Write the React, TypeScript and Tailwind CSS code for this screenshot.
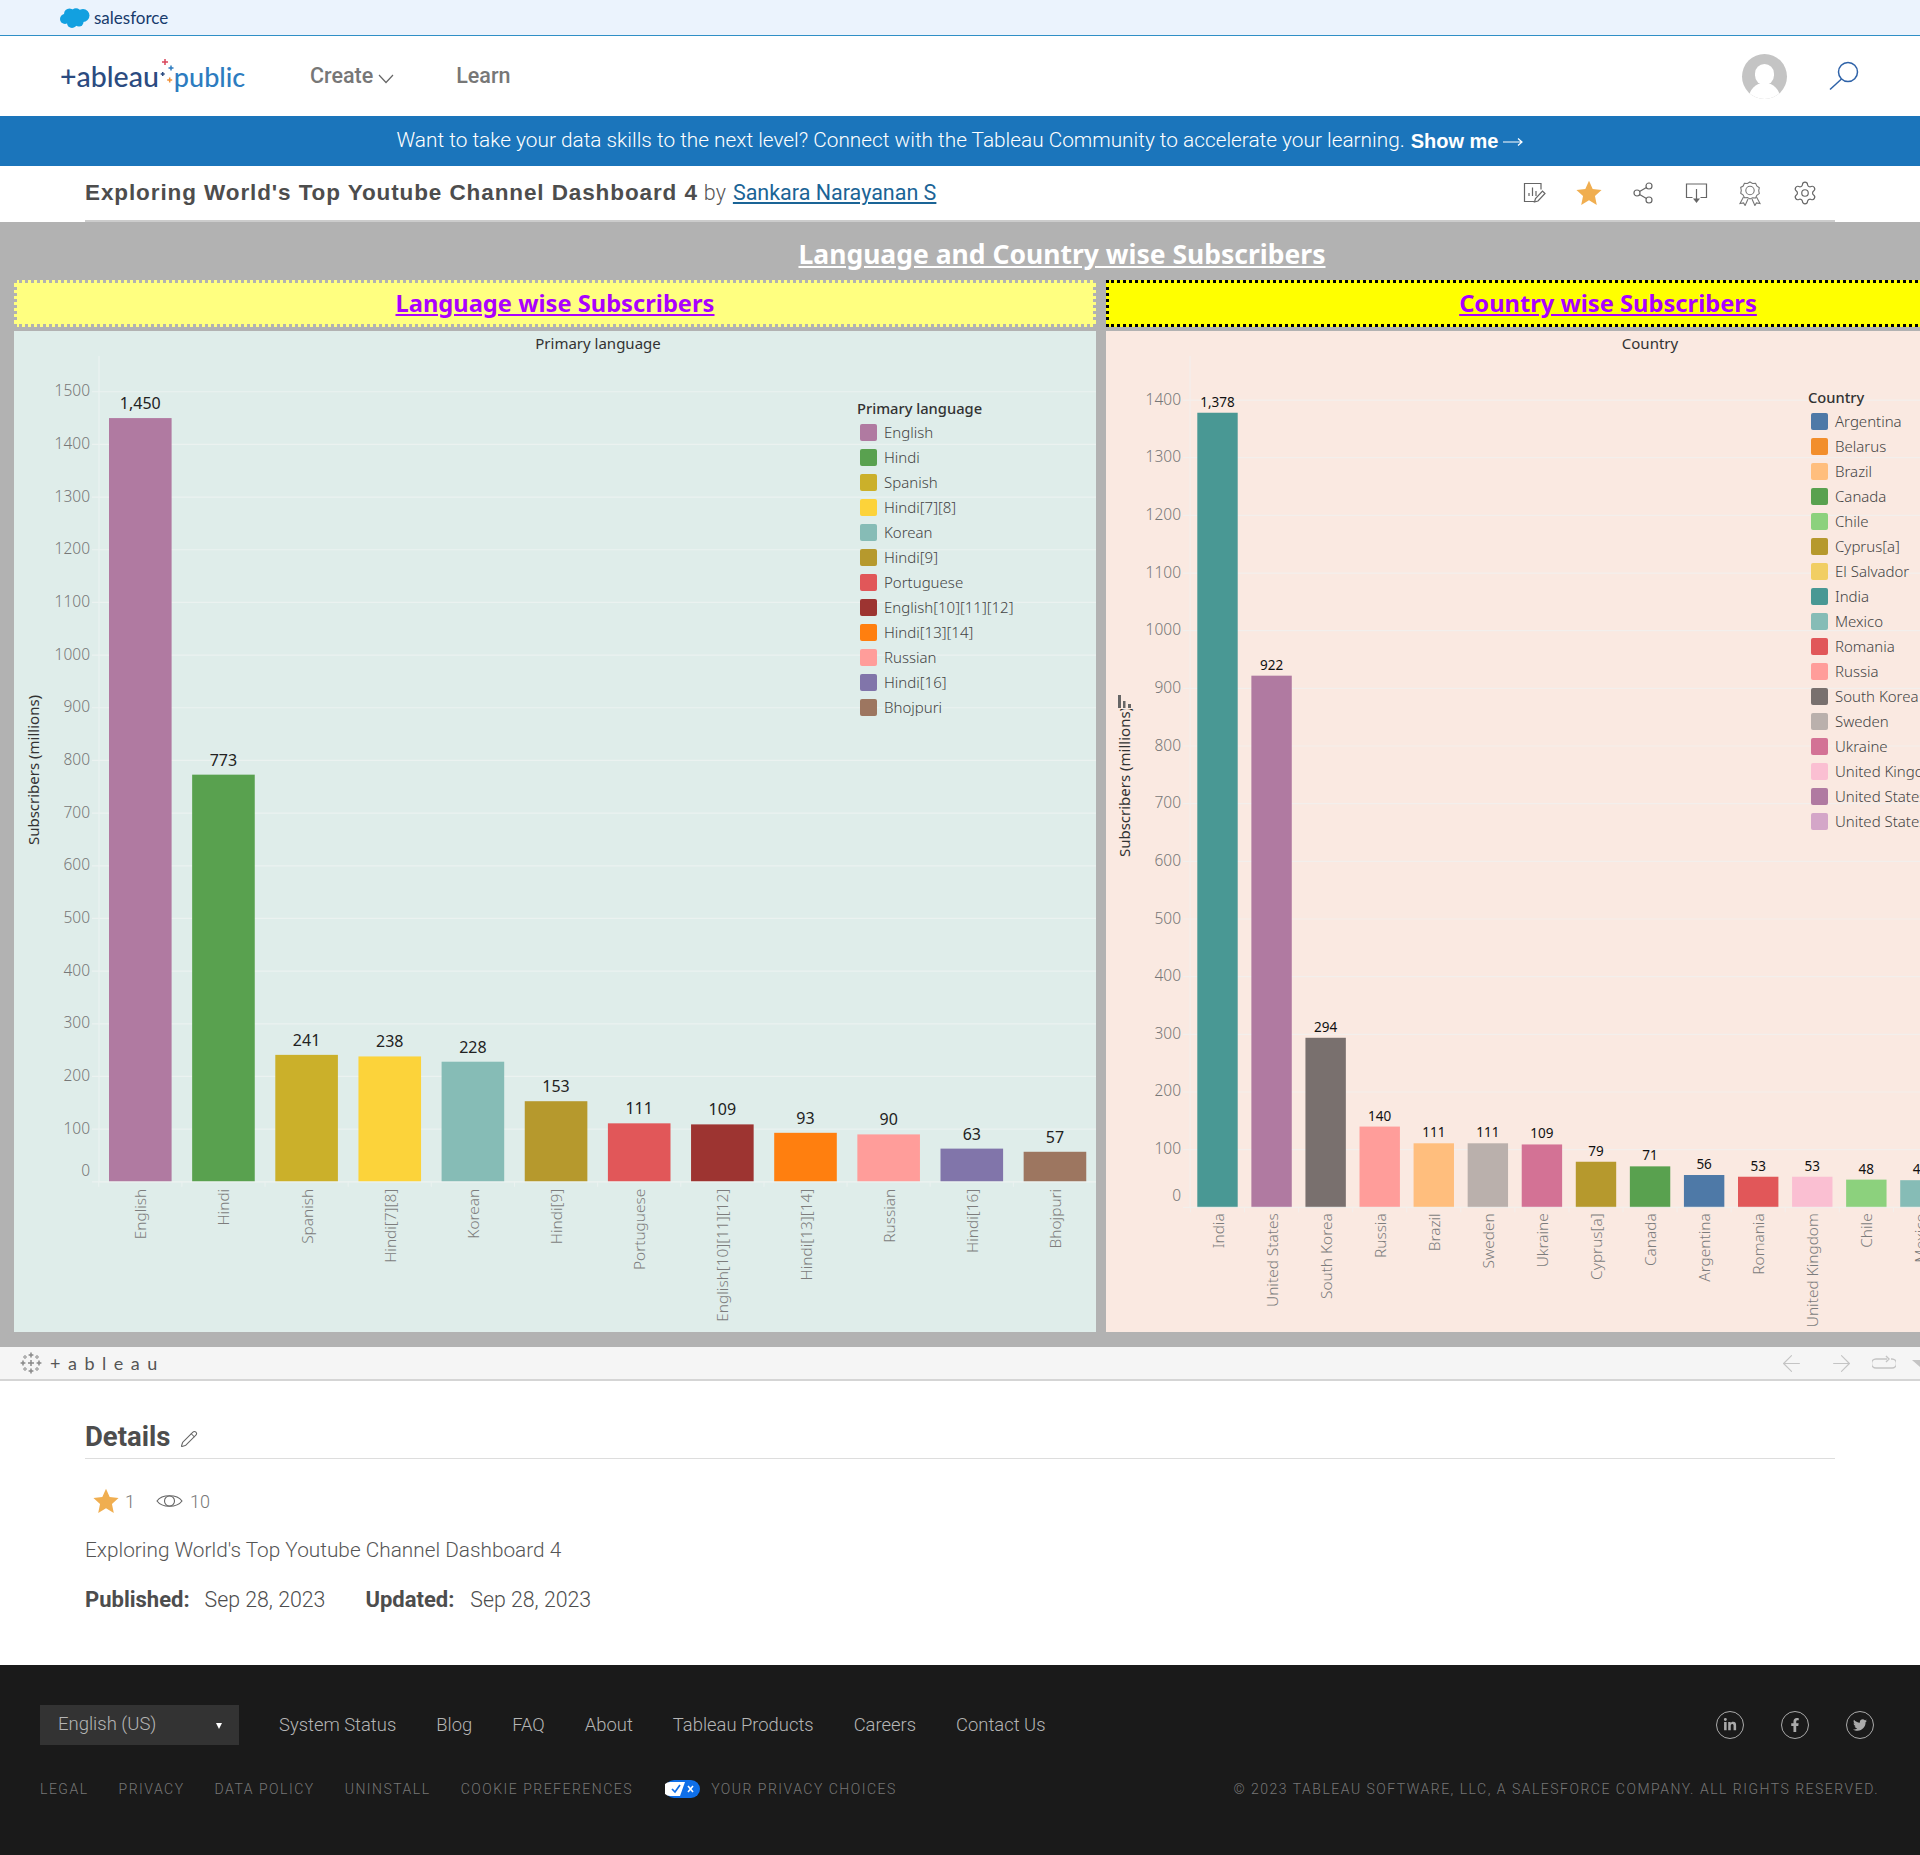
import { ArrowLeft, ArrowRight, Pencil, Settings, Share2 } from "lucide-react";
import { FaFacebookF, FaLinkedinIn, FaTwitter } from "react-icons/fa";

type Item = { name: string; value: number; color: string };

const languages: Item[] = [
  { name: "English", value: 1450, color: "#b07aa1" },
  { name: "Hindi", value: 773, color: "#59a14f" },
  { name: "Spanish", value: 241, color: "#cbb02a" },
  { name: "Hindi[7][8]", value: 238, color: "#fcd33a" },
  { name: "Korean", value: 228, color: "#86bcb6" },
  { name: "Hindi[9]", value: 153, color: "#b6992d" },
  { name: "Portuguese", value: 111, color: "#e15759" },
  { name: "English[10][11][12]", value: 109, color: "#9d3431" },
  { name: "Hindi[13][14]", value: 93, color: "#ff7f0f" },
  { name: "Russian", value: 90, color: "#ff9d9a" },
  { name: "Hindi[16]", value: 63, color: "#8175aa" },
  { name: "Bhojpuri", value: 57, color: "#9d7660" },
];

const countries: Item[] = [
  { name: "India", value: 1378, color: "#499894" },
  { name: "United States", value: 922, color: "#b07aa1" },
  { name: "South Korea", value: 294, color: "#79706e" },
  { name: "Russia", value: 140, color: "#ff9d9a" },
  { name: "Brazil", value: 111, color: "#ffbe7d" },
  { name: "Sweden", value: 111, color: "#bab0ac" },
  { name: "Ukraine", value: 109, color: "#d37295" },
  { name: "Cyprus[a]", value: 79, color: "#b6992d" },
  { name: "Canada", value: 71, color: "#59a14f" },
  { name: "Argentina", value: 56, color: "#4e79a7" },
  { name: "Romania", value: 53, color: "#e15759" },
  { name: "United Kingdom", value: 53, color: "#fabfd2" },
  { name: "Chile", value: 48, color: "#8cd17d" },
  { name: "Mexico", value: 47, color: "#86bcb6" },
];

const countryLegend = [
  ["Argentina", "#4e79a7"],
  ["Belarus", "#f28e2b"],
  ["Brazil", "#ffbe7d"],
  ["Canada", "#59a14f"],
  ["Chile", "#8cd17d"],
  ["Cyprus[a]", "#b6992d"],
  ["El Salvador", "#f1ce63"],
  ["India", "#499894"],
  ["Mexico", "#86bcb6"],
  ["Romania", "#e15759"],
  ["Russia", "#ff9d9a"],
  ["South Korea", "#79706e"],
  ["Sweden", "#bab0ac"],
  ["Ukraine", "#d37295"],
  ["United Kingdom", "#fabfd2"],
  ["United States", "#b07aa1"],
  ["United States of America", "#d4a6c8"],
];

interface ChartProps {
  items: Item[];
  title: string;
  titleX: number;
  width: number;
  axisX: number;
  baseY: number;
  step: number;
  maxTick: number;
  barX: number;
  barW: number;
  pitch: number;
  grid: string;
  valueSize: number;
  valueGap: number;
  valueFill: string;
  labelGap: number;
  axisTitleX: number;
  axisTitleY: number;
}

function BarChart(p: ChartProps) {
  const ticks: number[] = [];
  for (let t = 0; t <= p.maxTick; t += 100) ticks.push(t);

  return (
    <svg width={p.width} height={1001} className="block font-['Noto_Sans',sans-serif]">
      <text x={p.titleX} y={18} textAnchor="middle" fontSize={15} fill="#333">
        {p.title}
      </text>
      {ticks.map((t) => {
        const y = p.baseY - (t / 100) * p.step;
        return (
          <g key={t}>
            <line x1={p.axisX - 7} x2={p.width} y1={y} y2={y} stroke={p.grid} strokeWidth={1.2} />
            <text
              x={p.axisX - 9}
              y={t === 0 ? y - 6 : y + 4.5}
              textAnchor="end"
              fontSize={15.5}
              fontWeight={300}
              fill="#777"
            >
              {t}
            </text>
          </g>
        );
      })}
      <line x1={p.axisX} x2={p.axisX} y1={25} y2={p.baseY} stroke={p.grid} strokeWidth={1.2} />
      {p.items.map((it, i) => {
        const x = p.barX + i * p.pitch;
        const h = (it.value / 100) * p.step;
        const cx = x + p.barW / 2;
        return (
          <g key={it.name}>
            <line
              x1={x - (p.pitch - p.barW) / 2}
              x2={x - (p.pitch - p.barW) / 2}
              y1={p.baseY}
              y2={p.baseY + 5}
              stroke={p.grid}
              strokeWidth={1}
            />
            <rect x={x} y={p.baseY - h} width={p.barW} height={h} fill={it.color} />
            <text
              x={cx}
              y={p.baseY - h - p.valueGap}
              textAnchor="middle"
              fontSize={p.valueSize}
              fill={p.valueFill}
            >
              {it.value.toLocaleString("en-US")}
            </text>
            <text
              transform={`translate(${cx + 6},${p.baseY + p.labelGap}) rotate(-90)`}
              textAnchor="end"
              fontSize={15.4}
              fontWeight={300}
              fill="#7d7d7d"
            >
              {it.name}
            </text>
          </g>
        );
      })}
      <line x1={p.axisX} x2={p.width} y1={p.baseY} y2={p.baseY} stroke={p.grid} strokeWidth={1} />
      <text
        transform={`translate(${p.axisTitleX},${p.axisTitleY}) rotate(-90)`}
        textAnchor="middle"
        fontSize={15}
        fill="#333"
      >
        Subscribers (millions)
      </text>
    </svg>
  );
}

function Legend({ title, rows, className }: { title: string; rows: string[][]; className: string }) {
  return (
    <div className={`absolute font-['Noto_Sans',sans-serif] text-[15px] ${className}`}>
      <div className="h-[22px] leading-5 text-[#333] text-[14.7px] font-medium">{title}</div>
      {rows.map(([name, color]) => (
        <div key={name} className="flex h-[25px] items-center whitespace-nowrap font-light text-[#444]">
          <span className="ml-[3px] mr-[7px] h-[17px] w-[17px] rounded-[2px]" style={{ background: color }} />
          {name}
        </div>
      ))}
    </div>
  );
}

function SalesforceCloud() {
  return (
    <svg width="30" height="20" viewBox="0 0 30 20" fill="#12a0e0">
      <circle cx="9.5" cy="6" r="5.5" />
      <circle cx="16" cy="5" r="4.8" />
      <circle cx="23" cy="7.5" r="6.5" />
      <circle cx="5" cy="11" r="5" />
      <circle cx="12" cy="15" r="5" />
      <circle cx="19" cy="14" r="4.5" />
      <rect x="6" y="5" width="17" height="10" />
    </svg>
  );
}

function Plus({ x, y, s, color }: { x: number; y: number; s: number; color: string }) {
  return <path d={`M${x - s} ${y}H${x + s}M${x} ${y - s}V${y + s}`} stroke={color} strokeWidth={1.5} fill="none" />;
}

function Star({ size }: { size: number }) {
  return (
    <svg width={size} height={size} viewBox="0 0 24 24" fill="#f0ae50">
      <path d="M12 .8l3.4 7.6 8.2.9-6.1 5.5 1.7 8.2L12 18.8l-7.2 4.2 1.7-8.2L.4 9.3l8.2-.9z" />
    </svg>
  );
}

function EditChartIcon() {
  return (
    <svg width="24" height="24" viewBox="0 0 24 24" fill="none" stroke="#666" strokeWidth="1.2">
      <path d="M12 20.5H2.5V2.5h16.5v6" />
      <path d="M7 15v-3M10.5 15V6.5M14 15v-5" />
      <path d="M12.5 21l1-3.5 7-7.5 2.5 2.5-7 7.5z" />
    </svg>
  );
}

function DownloadIcon() {
  return (
    <svg width="23" height="21" viewBox="0 0 23 21" fill="none" stroke="#666" strokeWidth="1.2">
      <path d="M7.5 14.5H1.5V1h20v13.5h-6" />
      <path d="M11.5 6v11" />
      <path d="M8 15.5h7L11.5 20z" fill="#666" stroke="none" />
    </svg>
  );
}

function BadgeIcon() {
  return (
    <svg width="24" height="25" viewBox="0 0 24 25" fill="none" stroke="#777" strokeWidth="1.1">
      <path d="M12 1l2.6 1.5 3-.2 1.2 2.7 2.5 1.7-.6 3 .6 2.9-2.5 1.7-1.2 2.7-3-.2L12 18l-2.6-1.5-3 .2-1.2-2.7-2.5-1.7.6-2.9-.6-3L5.2 5l1.2-2.7 3 .2z" />
      <circle cx="12" cy="9.5" r="4.2" />
      <path d="M5.5 16L2 22.5l3.6-.6 1.5 2.6L10 18M18.5 16l3.5 6.5-3.6-.6-1.5 2.6L14 18" />
    </svg>
  );
}

function TableauMark() {
  return (
    <svg width="22" height="22" viewBox="0 0 22 22">
      <Plus x={11} y={11} s={3} color="#888" />
      <Plus x={11} y={3} s={2.4} color="#888" />
      <Plus x={11} y={19} s={2.4} color="#888" />
      <Plus x={3} y={11} s={2.4} color="#888" />
      <Plus x={19} y={11} s={2.4} color="#888" />
      <Plus x={5} y={5} s={2} color="#aaa" />
      <Plus x={17} y={5} s={2} color="#aaa" />
      <Plus x={5} y={17} s={2} color="#aaa" />
      <Plus x={17} y={17} s={2} color="#aaa" />
    </svg>
  );
}

function Social({ children }: { children: React.ReactNode }) {
  return (
    <span className="flex h-7 w-7 items-center justify-center rounded-full border border-[#aaa] text-[14px] text-[#aaa]">
      {children}
    </span>
  );
}

export default function App() {
  return (
    <div className="flex w-[1920px] flex-col overflow-hidden font-['Roboto',sans-serif]">
      <div className="flex h-9 items-center gap-1 border-b border-[#2f8fc6] bg-[#ebf3fd] pl-[60px]">
        <SalesforceCloud />
        <span className="font-['Lato',sans-serif] text-[17px] leading-none text-[#173a6c]">salesforce</span>
      </div>

      <div className="flex h-20 items-center bg-white pl-[60px] pr-[61px]">
        <div className="relative flex w-[250px] items-baseline font-['Lato',sans-serif] text-[28.5px] font-medium leading-none">
          <span className="text-[#2b4b80]">+ableau</span>
          <span className="ml-[15px] text-[27px] text-[#2d7cc0]">public</span>
          <svg width="24" height="36" viewBox="0 0 24 36" className="absolute left-[98px] -top-[12px]">
            <Plus x={7} y={12} s={3} color="#d9475c" />
            <Plus x={4.7} y={24} s={2} color="#2b4b80" />
            <Plus x={13} y={18} s={2.5} color="#2d7cc0" />
            <Plus x={11.7} y={30} s={2.5} color="#f0913a" />
          </svg>
        </div>
        <span className="flex items-center text-[21.5px] font-medium text-[#777]">
          Create
          <svg width="16" height="10" viewBox="0 0 16 10" fill="none" stroke="#666" strokeWidth="1.2" className="ml-[5px] mt-[5px]">
            <path d="M1 1l7 7.5L15 1" />
          </svg>
        </span>
        <span className="ml-[62px] text-[21.5px] font-medium text-[#777]">Learn</span>
        <div className="ml-auto flex items-center gap-[42px]">
          <div className="relative h-[45px] w-[45px] overflow-hidden rounded-full bg-[#c4c4c4]">
            <div className="absolute left-[13px] top-[10px] h-[21px] w-[19px] rounded-full bg-white" />
            <div className="absolute left-[7px] top-[29px] h-[30px] w-[31px] rounded-full bg-white" />
          </div>
          <svg width="30" height="30" viewBox="0 0 30 30" fill="none" stroke="#2e62a8" strokeWidth="1.5">
            <circle cx="19" cy="11" r="9.5" />
            <path d="M12.5 18L1 28.5" />
          </svg>
        </div>
      </div>

      <div className="flex h-[50px] items-center justify-center bg-[#1b75bb] text-white">
        <span className="text-[20.8px] font-light">
          Want to take your data skills to the next level? Connect with the Tableau Community to accelerate your
          learning.
        </span>
        <span className="ml-[6px] font-['Liberation_Sans',sans-serif] text-[20px] font-bold">Show me</span>
        <svg width="20" height="10" viewBox="0 0 20 10" fill="none" stroke="#fff" strokeWidth="1.2" className="ml-[5px] mt-[2px]">
          <path d="M0 5h19M15 1.5L19 5l-4 3.5" />
        </svg>
      </div>

      <div className="mx-[85px] flex h-[56px] items-center border-b-2 border-[#ccc] bg-white">
        <span className="font-['Liberation_Sans',sans-serif] text-[22.5px] font-bold tracking-[0.9px] text-[#4d4d4d]">
          Exploring World's Top Youtube Channel Dashboard 4
        </span>
        <span className="ml-[6px] text-[21.5px] font-light text-[#555]">by</span>
        <span className="ml-[7px] text-[21.5px] text-[#1a6496] underline">Sankara Narayanan S</span>
        <div className="ml-auto mr-[17px] flex items-center gap-[30px]">
          <EditChartIcon />
          <Star size={26} />
          <Share2 size={24} strokeWidth={1.2} className="-ml-px text-[#666]" />
          <DownloadIcon />
          <BadgeIcon />
          <Settings size={26} strokeWidth={1.1} className="text-[#666]" />
        </div>
      </div>

      <div className="overflow-hidden bg-[#b2b2b2] pb-[15px] pl-[14px]">
        <div className="w-[2096px] font-['Noto_Sans',sans-serif]">
          <div className="flex h-[58px] items-center justify-center pt-[7px] text-[26.5px] font-bold text-white underline">
            Language and Country wise Subscribers
          </div>
          <div className="flex gap-[10px]">
            <div className="flex w-[1082px] flex-col gap-1">
              <div className="flex h-[47px] items-center justify-center border-[3px] border-dotted border-[#b2b2b2] bg-[#ffff80] text-[23.7px] font-bold text-[#aa00ff] underline">
                Language wise Subscribers
              </div>
              <div className="relative bg-[#dfedea]">
                <BarChart
                  items={languages}
                  title="Primary language"
                  titleX={584}
                  width={1082}
                  axisX={85}
                  baseY={850.8}
                  step={52.67}
                  maxTick={1500}
                  barX={95}
                  barW={62.6}
                  pitch={83.15}
                  grid="#ebf2f0"
                  valueSize={16}
                  valueGap={9}
                  valueFill="#222"
                  labelGap={7}
                  axisTitleX={25}
                  axisTitleY={439}
                />
                <Legend
                  title="Primary language"
                  rows={languages.map((l) => [l.name, l.color])}
                  className="left-[843px] top-[67px]"
                />
              </div>
            </div>
            <div className="flex w-[1004px] flex-col gap-1">
              <div className="flex h-[47px] items-center justify-center border-[3px] border-dotted border-black bg-[#ffff00] text-[23.7px] font-bold text-[#aa00ff] underline">
                Country wise Subscribers
              </div>
              <div className="relative bg-[#fae9e1]">
                <BarChart
                  items={countries}
                  title="Country"
                  titleX={544}
                  width={1004}
                  axisX={84}
                  baseY={876.3}
                  step={57.66}
                  maxTick={1400}
                  barX={91.3}
                  barW={40.4}
                  pitch={54.07}
                  grid="#f3efec"
                  valueSize={13.5}
                  valueGap={6}
                  valueFill="#111"
                  labelGap={6}
                  axisTitleX={24}
                  axisTitleY={451}
                />
                <svg width="15" height="14" viewBox="0 0 15 14" className="absolute left-[11px] top-[364px]">
                  <rect width="15" height="14" fill="#fae9e1" />
                  <rect x="1" y="0" width="3" height="13" fill="#666" />
                  <rect x="6" y="6" width="2.5" height="7" fill="#666" />
                  <rect x="11" y="9" width="3" height="4" fill="#666" />
                </svg>
                <Legend title="Country" rows={countryLegend} className="left-[702px] top-[56px]" />
              </div>
            </div>
          </div>
        </div>
      </div>

      <div className="flex h-[34px] items-center border-b-2 border-[#d5d5d5] bg-[#f5f5f5] pl-5 text-[#c4c4c4]">
        <TableauMark />
        <span className="ml-2 font-['Lato',sans-serif] text-[18px] tracking-[7.5px] text-[#555]">+ableau</span>
        <ArrowLeft size={27} strokeWidth={1} className="ml-auto" />
        <ArrowRight size={27} strokeWidth={1} className="ml-[23px]" />
        <svg width="24" height="16" viewBox="0 0 24 16" fill="none" stroke="#c4c4c4" strokeWidth="1.4" className="ml-[17px]">
          <path d="M15 4H4a3 3 0 000 9h16a3 3 0 000-9h-1M14 1l3 3-3 3" />
        </svg>
        <span className="ml-[16px] mr-[-8px] h-0 w-0 border-x-[8px] border-t-[7px] border-x-transparent border-t-[#c4c4c4]" />
      </div>

      <div className="h-[284px] bg-white px-[85px] text-[#4d4d4d]">
        <div className="flex h-[78px] items-end gap-[10px] border-b border-[#ddd] pb-[3px]">
          <span className="text-[27.5px] font-bold leading-[36px]">Details</span>
          <Pencil size={18} strokeWidth={1.4} className="mb-[7px] text-[#666]" />
        </div>
        <div className="mt-[29px] flex h-[26px] items-center pl-2 text-[18px] font-light text-[#777]">
          <Star size={26} />
          <span className="ml-[6px]">1</span>
          <svg width="27" height="16" viewBox="0 0 27 16" fill="none" stroke="#666" strokeWidth="1.1" className="ml-[21px]">
            <path d="M1 8C6 1 21 1 26 8C21 15 6 15 1 8z" />
            <circle cx="13.5" cy="8" r="5" />
          </svg>
          <span className="ml-[7px]">10</span>
        </div>
        <div className="mt-[22px] text-[20.8px] font-light leading-7 text-[#555]">
          Exploring World's Top Youtube Channel Dashboard 4
        </div>
        <div className="mt-[22px] flex text-[21.3px] leading-7">
          <span className="text-[22px] font-bold">Published:</span>
          <span className="ml-[15px] font-light">Sep 28, 2023</span>
          <span className="ml-[40px] text-[22px] font-bold">Updated:</span>
          <span className="ml-[16px] font-light">Sep 28, 2023</span>
        </div>
      </div>

      <div className="h-[191px] bg-[#1a1a1a] px-10">
        <div className="flex pt-10 font-light text-[#b5b5b5]">
          <div className="relative flex h-10 w-[199px] items-center bg-[#333] pl-[18px] text-[18.5px]">
            English (US)
            <span className="absolute left-[176px] top-[18px] h-0 w-0 border-x-[3px] border-t-[6px] border-x-transparent border-t-white" />
          </div>
          <div className="ml-10 flex items-center gap-10 text-[18.4px]">
            <span>System Status</span>
            <span>Blog</span>
            <span>FAQ</span>
            <span>About</span>
            <span>Tableau Products</span>
            <span>Careers</span>
            <span>Contact Us</span>
          </div>
          <div className="ml-auto mr-[6px] flex items-center gap-[37px]">
            <Social>
              <FaLinkedinIn />
            </Social>
            <Social>
              <FaFacebookF />
            </Social>
            <Social>
              <FaTwitter />
            </Social>
          </div>
        </div>
        <div className="mt-[34px] flex h-[20px] items-center text-[14px] font-light uppercase tracking-[1.5px] text-[#777]">
          <span>Legal</span>
          <span className="ml-[30px]">Privacy</span>
          <span className="ml-[30px]">Data Policy</span>
          <span className="ml-[30px]">Uninstall</span>
          <span className="ml-[30px]">Cookie Preferences</span>
          <svg width="35" height="18" viewBox="0 0 35 18" className="ml-[32px]">
            <rect width="35" height="18" rx="9" fill="#0f6fe8" />
            <path d="M5 2h15l-5 14H5a7 7 0 010-14z" fill="#fff" />
            <path d="M7 9l3 3 5-7" stroke="#0f6fe8" strokeWidth="1.7" fill="none" />
            <path d="M23 6l5 6M28 6l-5 6" stroke="#fff" strokeWidth="1.6" />
          </svg>
          <span className="ml-[11px]">Your Privacy Choices</span>
          <span className="ml-auto mr-[1px]">© 2023 Tableau Software, LLC, a Salesforce Company. All Rights Reserved.</span>
        </div>
      </div>
    </div>
  );
}
